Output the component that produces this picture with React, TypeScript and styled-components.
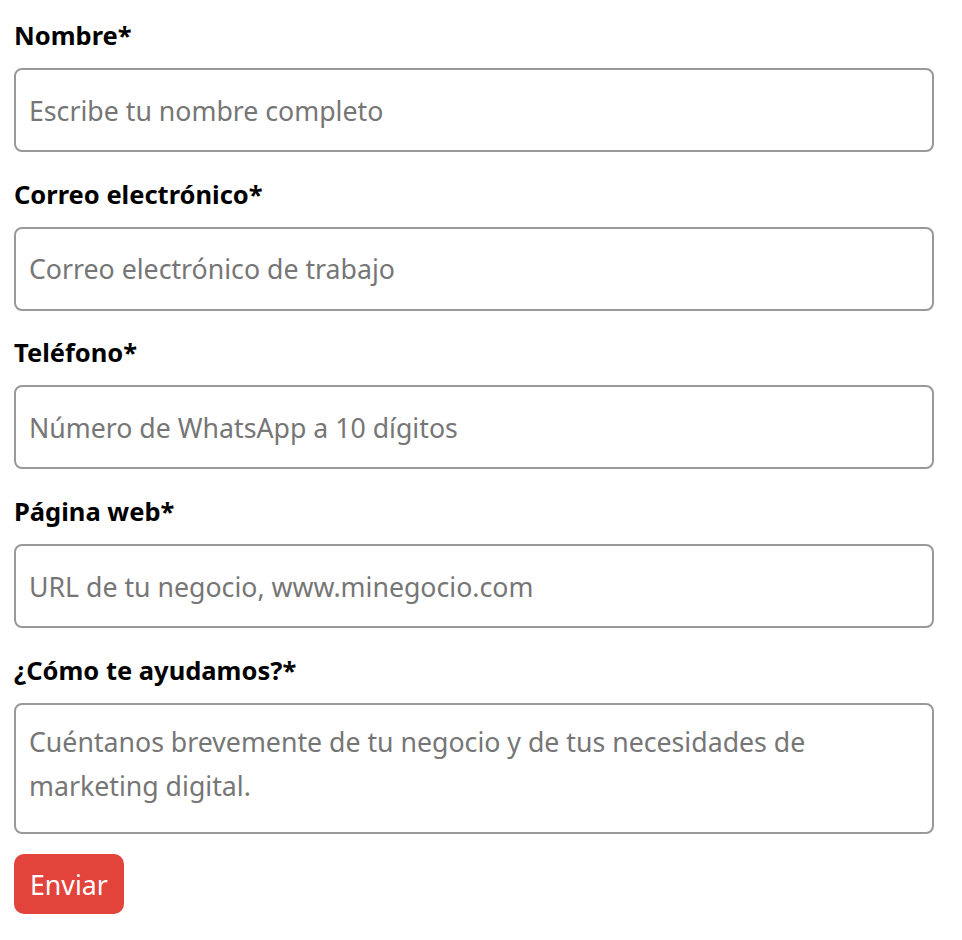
import React from "react";
import styled, { createGlobalStyle } from "styled-components";

const Global = createGlobalStyle`
  html, body { margin: 0; padding: 0; background: #fff; }
  body { font-family: "Noto Sans", "Open Sans", sans-serif; color: #000; }
  * { box-sizing: border-box; }
`;

const Form = styled.form`
  display: flex;
  flex-direction: column;
  padding: 17px 28px 0 14px;
  width: 962px;
`;

const Field = styled.div`
  display: flex;
  flex-direction: column;
  margin-bottom: 23.7px;
`;

const Label = styled.label`
  font-size: 25.5px;
  font-weight: 700;
  line-height: 36px;
  margin-bottom: 15px;
`;

const Input = styled.input`
  width: 920px;
  height: 84px;
  border: 2px solid #999;
  border-radius: 8px;
  padding: 0 13px;
  font-family: inherit;
  font-size: 26.7px;
  color: #222;
  outline: none;
  &::placeholder { color: #767676; }
`;

const TextArea = styled.textarea`
  width: 920px;
  height: 131px;
  border: 2px solid #999;
  border-radius: 8px;
  padding: 15px 100px 12px 13px;
  font-family: inherit;
  font-size: 26.7px;
  line-height: 44px;
  resize: none;
  outline: none;
  &::placeholder { color: #767676; }
`;

const Button = styled.button`
  align-self: flex-start;
  margin-top: -3px;
  height: 60px;
  padding: 0 16px;
  background: #e2433b;
  color: #fff;
  border: none;
  border-radius: 10px;
  font-family: inherit;
  font-size: 26.7px;
`;

const fields = [
  { label: "Nombre*", ph: "Escribe tu nombre completo" },
  { label: "Correo electrónico*", ph: "Correo electrónico de trabajo" },
  { label: "Teléfono*", ph: "Número de WhatsApp a 10 dígitos" },
  { label: "Página web*", ph: "URL de tu negocio, www.minegocio.com" },
];

export default function App() {
  return (
    <>
      <Global />
      <Form onSubmit={(e) => e.preventDefault()}>
        {fields.map((f) => (
          <Field key={f.label}>
            <Label>{f.label}</Label>
            <Input placeholder={f.ph} />
          </Field>
        ))}
        <Field>
          <Label>¿Cómo te ayudamos?*</Label>
          <TextArea placeholder="Cuéntanos brevemente de tu negocio y de tus necesidades de marketing digital." />
        </Field>
        <Button type="submit">Enviar</Button>
      </Form>
    </>
  );
}
